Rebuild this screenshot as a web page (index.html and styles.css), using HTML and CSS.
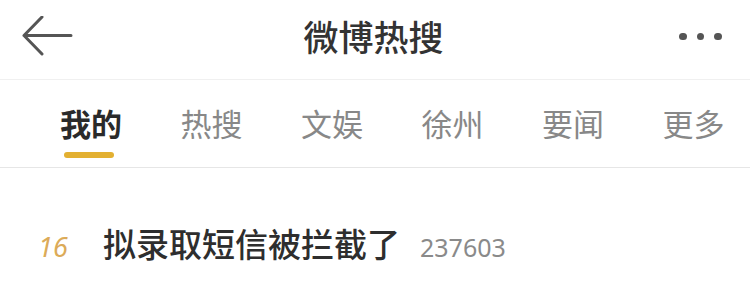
FILE: index.html
```html
<!DOCTYPE html>
<html lang="zh-CN">
<head>
<meta charset="utf-8">
<link rel="stylesheet" href="styles.css">
</head>
<body>
<div class="page">
  <header class="header">
    <div class="back">
      <svg width="52" height="40" viewBox="0 0 52 40">
        <path d="M50 19.5 H3 M21 1 L3 19.5 L21 38" fill="none" stroke="#555" stroke-width="3" stroke-linecap="round" stroke-linejoin="round"/>
      </svg>
    </div>
    <div class="title">微博热搜</div>
    <div class="more"><span class="dot"></span><span class="dot"></span><span class="dot"></span></div>
  </header>
  <nav class="tabs">
    <div class="tab active">我的<span class="bar"></span></div>
    <div class="tab">热搜</div>
    <div class="tab">文娱</div>
    <div class="tab">徐州</div>
    <div class="tab">要闻</div>
    <div class="tab">更多</div>
  </nav>
  <div class="row">
    <span class="rank">16</span>
    <span class="topic">拟录取短信被拦截了</span>
    <span class="count">237603</span>
  </div>
</div>
</body>
</html>
```

FILE: styles.css
```css
html, body {
  margin: 0;
  padding: 0;
  background: #fff;
}
.page {
  width: 750px;
  height: 283px;
  overflow: hidden;
  font-family: "Noto Sans CJK SC", "Noto Sans", sans-serif;
}
.header {
  height: 80px;
  border-bottom: 1.5px solid #f0f0f0;
  box-sizing: border-box;
  display: flex;
  align-items: center;
  justify-content: space-between;
  padding: 0 28px 8px 21px;
}
.back {
  width: 52px;
  height: 40px;
  display: flex;
}
.title {
  font-size: 35px;
  font-weight: 500;
  color: #333;
  line-height: 40px;
  margin-left: 4px;
}
.more {
  display: flex;
  gap: 10px;
  width: 52px;
  justify-content: flex-end;
  padding-top: 2px;
}
.dot {
  width: 7.5px;
  height: 7.5px;
  border-radius: 50%;
  background: #555;
}
.tabs {
  height: 88px;
  box-sizing: border-box;
  border-bottom: 1.5px solid #e6e6e6;
  display: flex;
  gap: 58.5px;
  padding: 26px 0 0 60px;
}
.tab {
  position: relative;
  font-size: 31px;
  line-height: 34px;
  color: #888;
  height: 34px;
}
.tab.active {
  color: #2a2a2a;
  font-weight: 700;
}
.bar {
  position: absolute;
  left: 4px;
  top: 46px;
  width: 50px;
  height: 6px;
  border-radius: 3px;
  background: #e3b031;
}
.row {
  display: flex;
  align-items: baseline;
  padding: 51px 0 0 38px;
}
.rank {
  font-size: 27px;
  font-style: italic;
  color: #dcab58;
  width: 65px;
  font-family: "Noto Sans", sans-serif;
}
.topic {
  font-size: 33px;
  font-weight: 500;
  color: #2e2e2e;
}
.count {
  font-size: 25px;
  color: #8a8a8a;
  margin-left: 20px;
  font-family: "Noto Sans", sans-serif;
}
```
